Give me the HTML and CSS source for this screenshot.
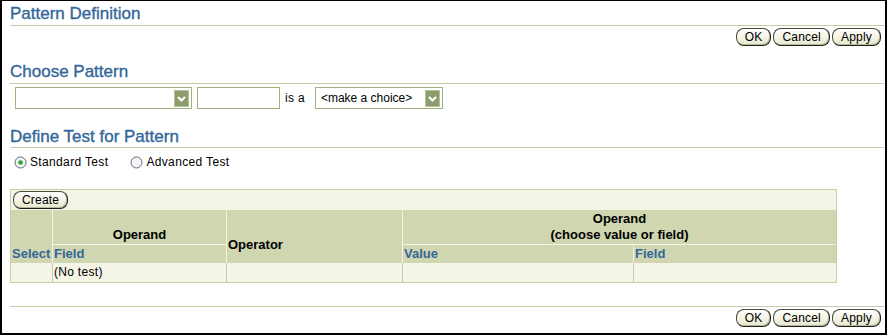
FILE: index.html
```html
<!DOCTYPE html>
<html>
<head>
<meta charset="utf-8">
<title>Pattern Definition</title>
<link rel="stylesheet" href="styles.css">
</head>
<body>
<div class="frame">
  <h2 class="sec sec-first">Pattern Definition</h2>
  <div class="btnbar">
    <button class="btn">OK</button><button class="btn">Cancel</button><button class="btn">Apply</button>
  </div>

  <h2 class="sec sec-choose">Choose Pattern</h2>
  <div class="inputs">
    <div class="select select-wide">
      <span class="val"></span>
      <span class="dd"><svg width="15" height="17" viewBox="0 0 15 17"><rect x="0.5" y="0.5" width="14" height="16" fill="#8c9d6b" stroke="#b7c39a"/><polyline points="4,7 7.5,10.5 11,7" fill="none" stroke="#fff" stroke-width="2.2"/></svg></span>
    </div>
    <input class="text-in" type="text">
    <span class="isa">is a</span>
    <div class="select select-choice">
      <span class="val">&lt;make a choice&gt;</span>
      <span class="dd"><svg width="15" height="17" viewBox="0 0 15 17"><rect x="0.5" y="0.5" width="14" height="16" fill="#8c9d6b" stroke="#b7c39a"/><polyline points="4,7 7.5,10.5 11,7" fill="none" stroke="#fff" stroke-width="2.2"/></svg></span>
    </div>
  </div>

  <h2 class="sec sec-test">Define Test for Pattern</h2>
  <div class="radios">
    <label class="radio"><svg width="13" height="13" viewBox="0 0 13 13"><circle cx="6.5" cy="6.5" r="5.5" fill="#f4f4f4" stroke="#5f6b78"/><circle cx="6.5" cy="6.5" r="2.3" fill="#31a531"/></svg>Standard Test</label>
    <label class="radio radio-second"><svg width="13" height="13" viewBox="0 0 13 13"><circle cx="6.5" cy="6.5" r="5.5" fill="#f4f4f4" stroke="#5f6b78"/></svg>Advanced Test</label>
  </div>

  <div class="tbl">
    <div class="tbl-bar"><button class="btn">Create</button></div>
    <table class="grid">
      <colgroup>
        <col class="c1"><col class="c2"><col class="c3"><col class="c4"><col class="c5">
      </colgroup>
      <thead>
        <tr class="hr1">
          <th rowspan="2" class="sort first">Select</th>
          <th class="grp">Operand</th>
          <th rowspan="2" class="opr">Operator</th>
          <th colspan="2" class="grp">Operand<br>(choose value or field)</th>
        </tr>
        <tr class="hr2">
          <th class="sort">Field</th>
          <th class="sort">Value</th>
          <th class="sort">Field</th>
        </tr>
      </thead>
      <tbody>
        <tr>
          <td class="first"></td>
          <td>(No test)</td>
          <td></td>
          <td></td>
          <td></td>
        </tr>
      </tbody>
    </table>
  </div>

  <div class="footer">
    <div class="btnbar btnbar-foot">
      <button class="btn">OK</button><button class="btn">Cancel</button><button class="btn">Apply</button>
    </div>
  </div>
</div>
</body>
</html>
```

FILE: styles.css
```css
* { box-sizing: border-box; }

html, body {
  margin: 0;
  padding: 0;
  background: #fff;
}

body {
  font-family: "Liberation Sans", Arial, sans-serif;
  font-size: 12px;
  color: #000;
}

.frame {
  width: 887px;
  height: 335px;
  border-style: solid;
  border-color: #000;
  border-width: 1px 2px 2px 2px;
  padding: 0 1px 0 8px;
  overflow: hidden;
}

.sec {
  margin: 0;
  font-family: "Liberation Sans", Arial, sans-serif;
  font-size: 17px;
  font-weight: normal;
  line-height: 20px;
  color: #336699;
  -webkit-text-stroke: 0.35px #336699;
  padding-bottom: 1px;
  border-bottom: 1px solid #c9cba6;
}

.sec-first { margin-top: 3px; }
.sec-choose { margin-top: 16px; }
.sec-test { margin-top: 18px; padding-bottom: 0; }

.btnbar {
  display: flex;
  justify-content: flex-end;
  gap: 2px;
  margin-top: 2px;
  padding-right: 3px;
}

.btn {
  font-family: "Liberation Sans", Arial, sans-serif;
  font-size: 12px;
  line-height: 14px;
  height: 18px;
  padding: 0 8px;
  margin: 0;
  color: #000;
  letter-spacing: 0.2px;
  border: 1px solid #4a4a40;
  border-bottom-color: #1e1e18;
  border-right-color: #1e1e18;
  border-radius: 8px;
  background: linear-gradient(#ffffff, #f3f3e3 55%, #e6e7cf);
  box-shadow: inset -1px -1px 0 #b8b99c;
}

.inputs {
  display: flex;
  align-items: center;
  margin-top: 3px;
  padding-left: 5px;
  height: 22px;
}

.select {
  display: flex;
  align-items: center;
  height: 22px;
  border: 1px solid #a2b27f;
  padding: 1px 1px 1px 5px;
  background: #fff;
}

.select .val {
  flex: 1;
  white-space: nowrap;
  font-size: 12px;
}

.select .dd {
  display: block;
  width: 15px;
  height: 17px;
  margin-right: 1px;
}

.select .dd svg { display: block; }

.select-wide { width: 177px; }
.select-choice { width: 128px; margin-left: 10px; }

.text-in {
  width: 83px;
  height: 22px;
  margin: 0 0 0 5px;
  border: 1px solid #a2b27f;
  padding: 0;
  background: #fff;
}

.isa {
  margin-left: 5px;
  letter-spacing: 0.3px;
}

.radios {
  display: flex;
  align-items: center;
  margin-top: 6px;
  height: 16px;
  padding-left: 4px;
}

.radio {
  display: flex;
  align-items: center;
  letter-spacing: 0.35px;
}

.radio svg {
  display: block;
  margin-right: 3px;
}

.radio-second { margin-left: 22px; }

.tbl {
  margin-top: 19px;
  width: 827px;
  border: 1px solid #c9cda6;
  background: #f5f5e7;
}

.tbl-bar {
  height: 20px;
  padding: 1px 2px;
}

.grid {
  width: 825px;
  table-layout: fixed;
  border-collapse: separate;
  border-spacing: 0;
}

.c1 { width: 41px; }
.c2 { width: 174px; }
.c3 { width: 176px; }
.c4 { width: 231px; }
.c5 { width: 203px; }

.grid th, .grid td {
  box-sizing: border-box;
  padding: 1px;
  text-align: left;
}

.grid th {
  background: #cfd6b0;
  font-size: 13px;
  font-weight: bold;
  line-height: 16px;
  vertical-align: bottom;
  border-left: 1px solid #f3f3e4;
  color: #000;
}

.grid th.first, .grid td.first { border-left: none; }

.grid th.grp { text-align: center; }

.grid th.sort { color: #336699; }

.grid th.opr { padding-bottom: 10px; }

.hr2 th {
  border-top: 1px solid #f3f3e4;
}

.grid td {
  height: 19px;
  padding: 2px 1px;
  line-height: 15px;
  font-size: 12px;
  vertical-align: middle;
  border-left: 1px solid #c9cda6;
  letter-spacing: 0.3px;
}

.footer {
  margin-top: 23px;
  border-top: 1px solid #c9cba6;
  padding-top: 0;
}

.btnbar-foot { margin-top: 2px; }
```
